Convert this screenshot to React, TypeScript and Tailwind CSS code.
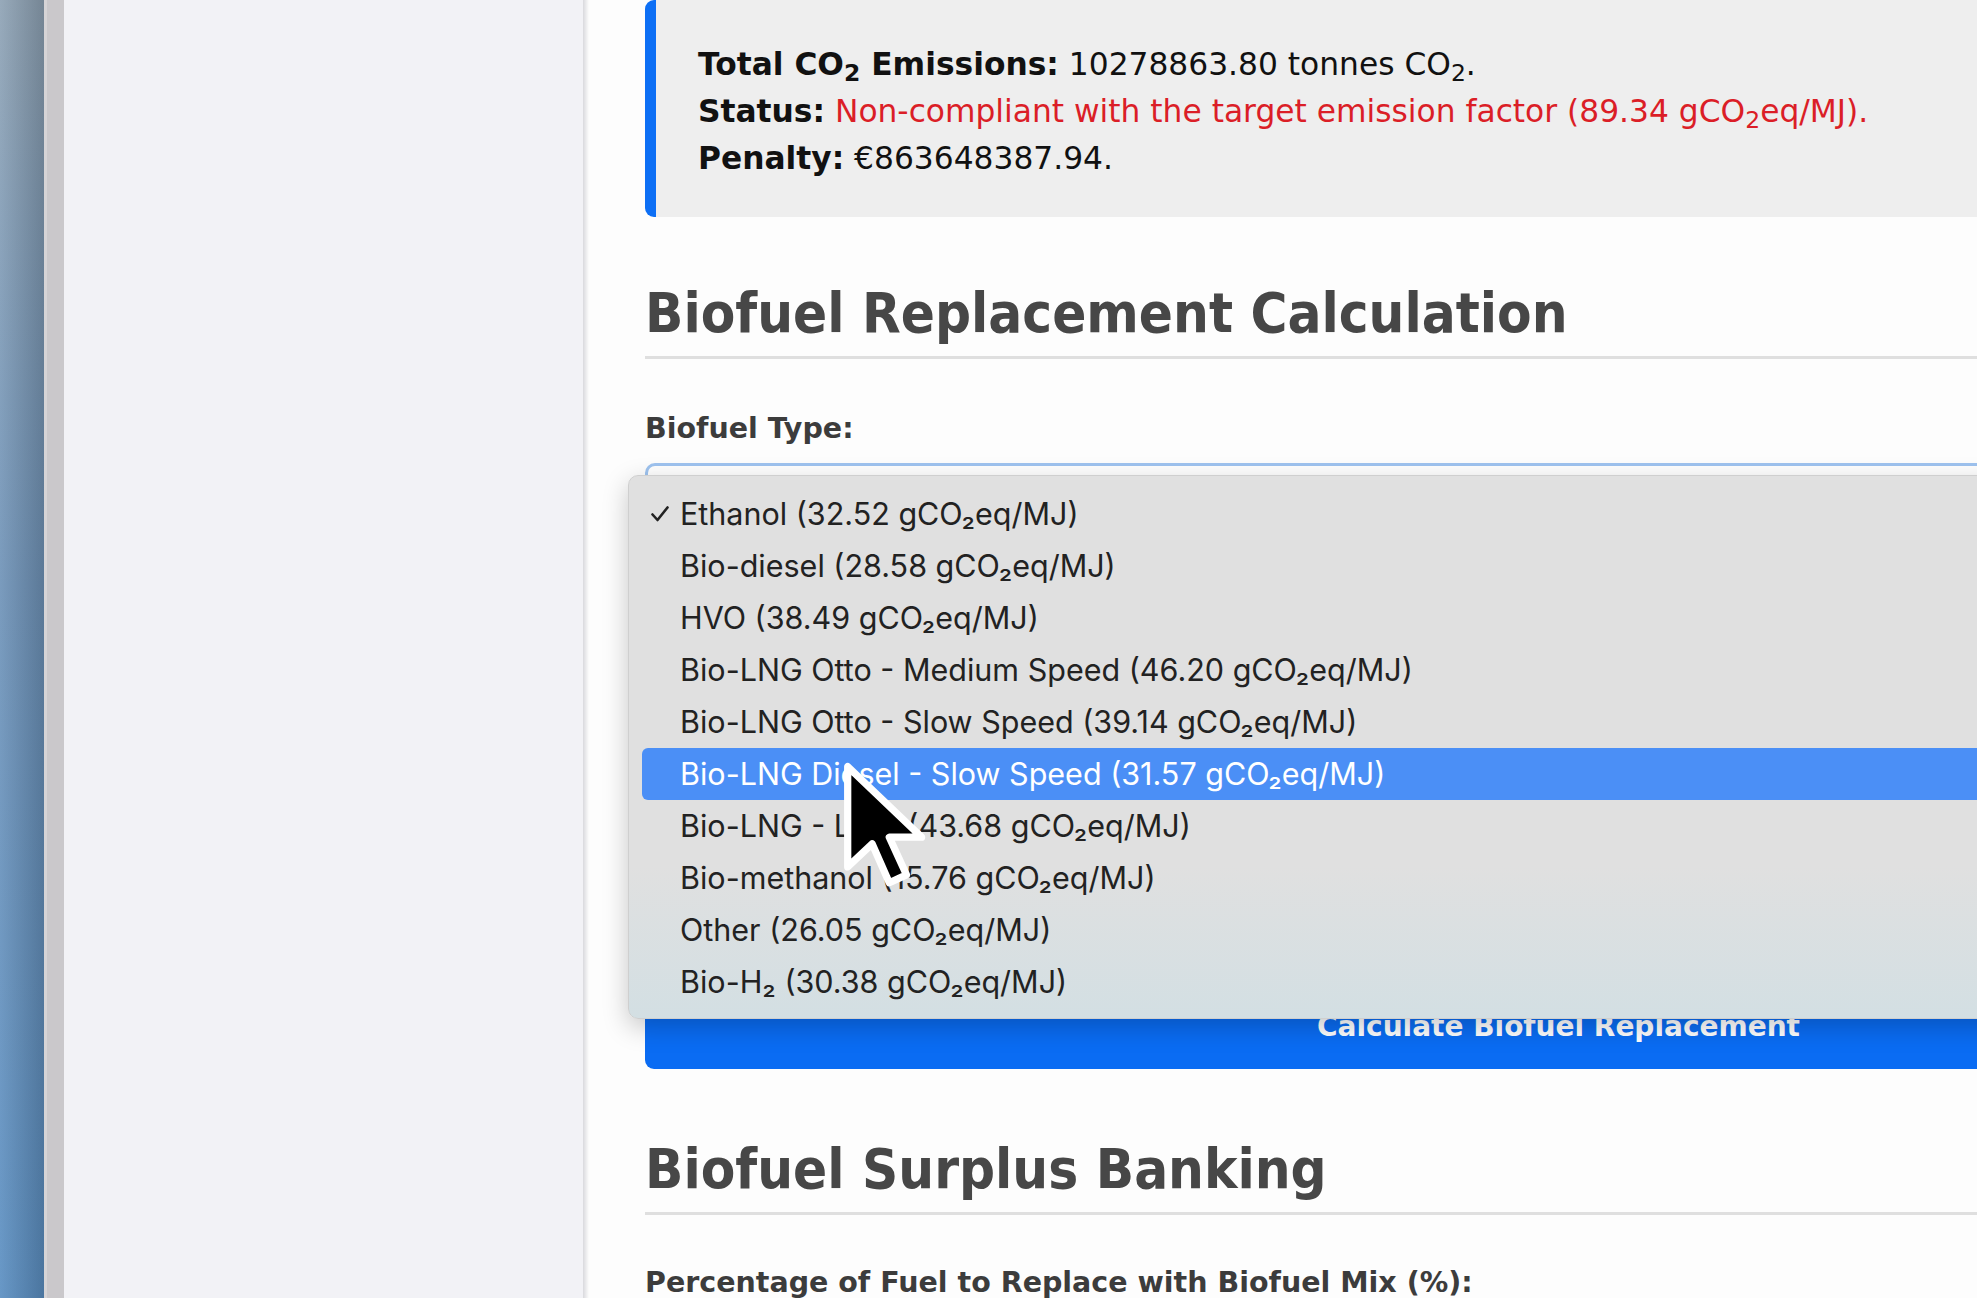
import { Fragment } from "react";

const options = [
  "Ethanol (32.52 gCO₂eq/MJ)",
  "Bio-diesel (28.58 gCO₂eq/MJ)",
  "HVO (38.49 gCO₂eq/MJ)",
  "Bio-LNG Otto - Medium Speed (46.20 gCO₂eq/MJ)",
  "Bio-LNG Otto - Slow Speed (39.14 gCO₂eq/MJ)",
  "Bio-LNG Diesel - Slow Speed (31.57 gCO₂eq/MJ)",
  "Bio-LNG - LBSI (43.68 gCO₂eq/MJ)",
  "Bio-methanol (15.76 gCO₂eq/MJ)",
  "Other (26.05 gCO₂eq/MJ)",
  "Bio-H₂ (30.38 gCO₂eq/MJ)",
];

const selected = 0;
const hovered = 5;

function Cursor() {
  return (
    <svg
      viewBox="0 0 13 20"
      width={86}
      height={132}
      className="absolute left-[841px] top-[760px] z-30"
    >
      <path
        d="M1 1 L1 16.2 L4.7 12.7 L7.3 18.6 L9.9 17.4 L7.3 11.7 L12.2 11.7 Z"
        fill="#000"
        stroke="#fff"
        strokeWidth="1.1"
        strokeLinejoin="round"
      />
    </svg>
  );
}

function Heading({ children, className = "" }: { children: string; className?: string }) {
  return (
    <h2
      className={`font-['DejaVu_Sans_Condensed','DejaVu_Sans',sans-serif] font-stretch-condensed text-[56px] leading-[70px] font-bold text-[#474747] pb-[8px] border-b-[3px] border-[#dfdfdf] ${className}`}
    >
      {children}
    </h2>
  );
}

export default function App() {
  return (
    <div className="relative flex h-[1298px] w-[1977px] overflow-hidden bg-white">
      {/* desktop edge */}
      <div className="w-[44px] shrink-0 bg-[linear-gradient(to_right,rgba(255,255,255,0.08),rgba(0,0,0,0.18)),linear-gradient(to_bottom,#8fa3b5,#6f93b8_45%,#5b8fc2)]" />
      {/* window frame */}
      <div className="w-[20px] shrink-0 border-l-[3px] border-[#d6d4d6] bg-[#cac8cb]" />
      {/* sidebar */}
      <div className="w-[519px] shrink-0 bg-[#f2f2f6]" />
      <div className="w-[6px] shrink-0 bg-[linear-gradient(to_right,#d9d9dd,#fdfdfd)]" />

      {/* main */}
      <main className="relative flex-1 overflow-hidden bg-[#fdfdfd]">
        <div className="w-[1827px] pl-[56px] box-content">
          <div className="rounded-l-[9px] border-l-[11px] border-[#0d6ff5] bg-[#eeeeee] pl-[42px] pt-[41px] pb-[35px] font-['DejaVu_Sans',sans-serif] text-[31.3px] leading-[47px] text-[#111]">
            <p>
              <strong>
                Total CO<sub>2</sub> Emissions:
              </strong>{" "}
              10278863.80 tonnes CO<sub>2</sub>.
            </p>
            <p>
              <strong>Status:</strong>{" "}
              <span className="text-[#db1e27]">
                Non-compliant with the target emission factor (89.34 gCO<sub>2</sub>eq/MJ).
              </span>
            </p>
            <p>
              <strong>Penalty:</strong> €863648387.94.
            </p>
          </div>

          <Heading className="mt-[61px]">Biofuel Replacement Calculation</Heading>

          <label className="mt-[53px] block font-['DejaVu_Sans',sans-serif] text-[28.5px] leading-[34px] font-bold text-[#3c3c3c]">
            Biofuel Type:
          </label>
          <div className="mt-[17px] h-[52px] rounded-[10px] border-[3px] border-[#9ec3ef] bg-white" />

          <button className="mt-[465px] flex h-[89px] w-full items-center justify-center rounded-[9px] bg-[#0a6cf3] pt-[4px] font-['DejaVu_Sans',sans-serif] text-[28px] font-bold text-white">
            Calculate Biofuel Replacement
          </button>

          <Heading className="mt-[65px]">Biofuel Surplus Banking</Heading>

          <label className="mt-[51px] block font-['DejaVu_Sans',sans-serif] text-[28.5px] leading-[34px] font-bold text-[#3c3c3c]">
            Percentage of Fuel to Replace with Biofuel Mix (%):
          </label>
        </div>
      </main>

      {/* open select menu */}
      <div className="absolute left-[628px] top-[475px] z-20 h-[544px] w-[1500px] rounded-[10px] border border-[#cfcfcf] bg-[linear-gradient(to_bottom,#e0e0e0_0%,#e0e0e0_72%,#d3dfe3_100%)] pt-[12px] shadow-[0_8px_26px_rgba(0,0,0,0.22)] font-['Inter',sans-serif] text-[30.5px] text-[#222]">
        {options.map((opt, i) => (
          <Fragment key={opt}>
            <div
              className={`mx-[13px] flex h-[52px] items-center rounded-[6px] pl-[8px] ${
                i === hovered ? "bg-[#4b8ff6] text-white" : ""
              }`}
            >
              <span className="flex w-[30px] shrink-0 items-center">
                {i === selected && (
                  <svg viewBox="0 0 20 20" width={20} height={20}>
                    <path
                      d="M2.5 10.5 L7.5 16 L17.5 3.5"
                      fill="none"
                      stroke="#222"
                      strokeWidth="2.6"
                      strokeLinecap="round"
                      strokeLinejoin="round"
                    />
                  </svg>
                )}
              </span>
              <span className="whitespace-nowrap">{opt}</span>
            </div>
          </Fragment>
        ))}
      </div>

      <Cursor />
    </div>
  );
}
